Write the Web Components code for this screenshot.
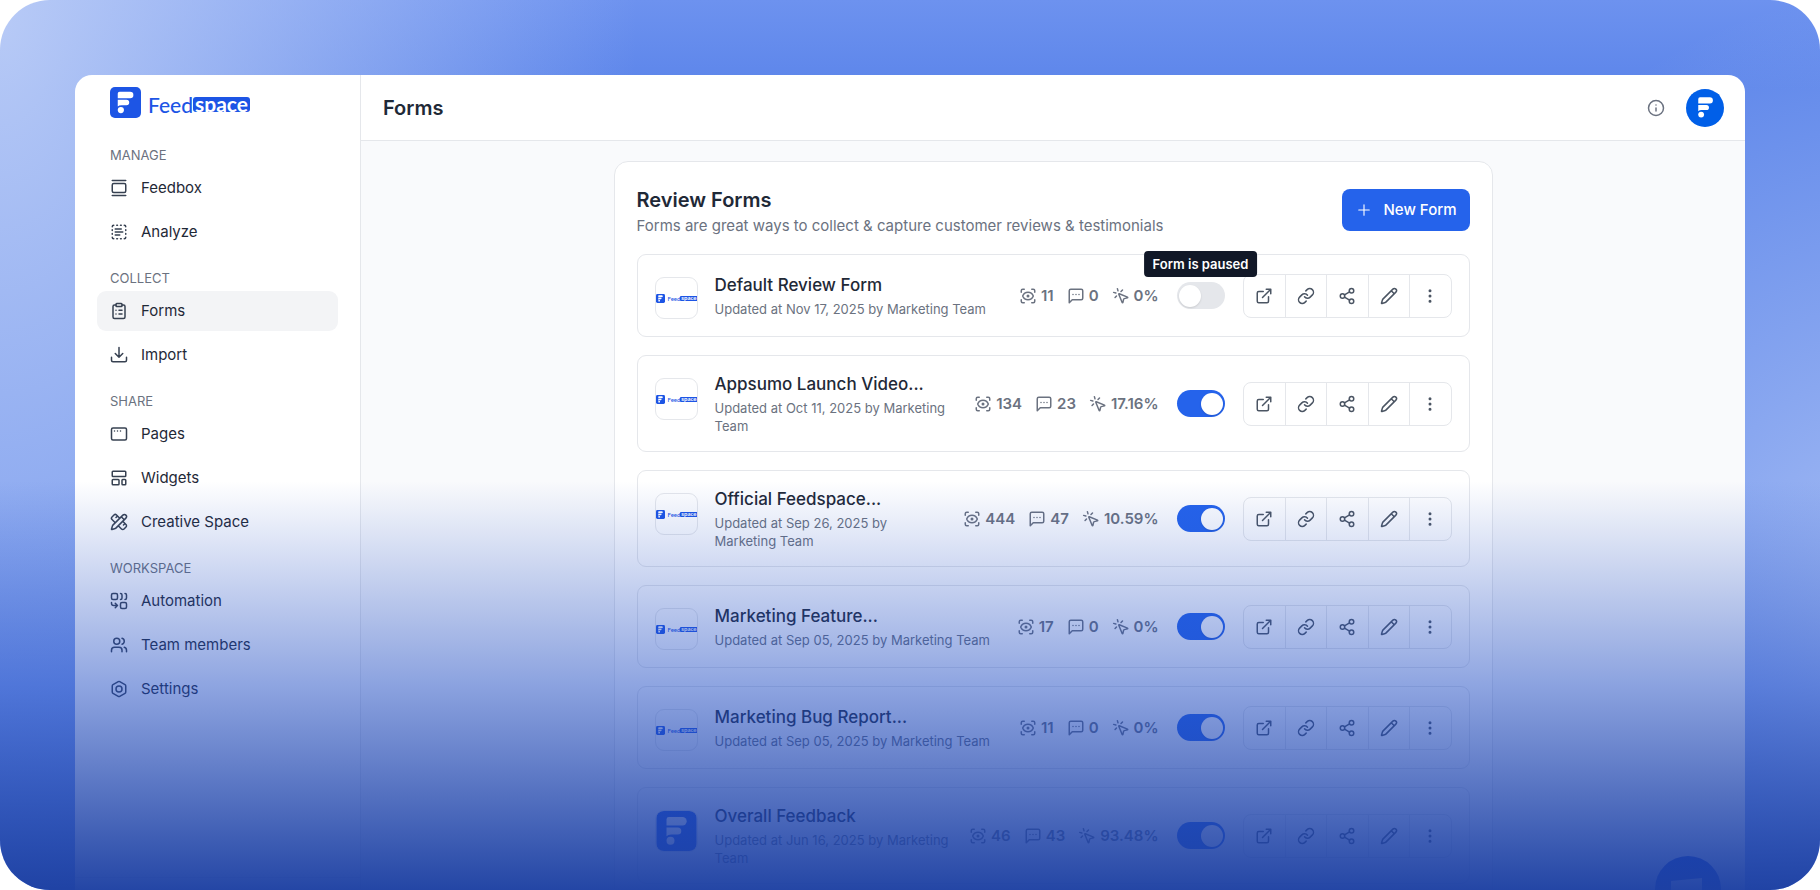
<!DOCTYPE html>
<html lang="en">
<head>
<meta charset="utf-8">
<title>Forms - Feedspace</title>
<meta name="viewport" content="width=device-width, initial-scale=1">
<style>
  body { margin: 0; background: #fff; font-family: Inter, "Liberation Sans", sans-serif; font-size: 15px; color: #1f2937; }
</style>
</head>
<body>
<app-stage>
  <app-shell>
    <side-bar slot="side">
      <nav-section label="Manage">
        <nav-item icon="gallery">Feedbox</nav-item>
        <nav-item icon="analyze">Analyze</nav-item>
      </nav-section>
      <nav-section label="Collect">
        <nav-item icon="clipboard" current>Forms</nav-item>
        <nav-item icon="download">Import</nav-item>
      </nav-section>
      <nav-section label="Share">
        <nav-item icon="window">Pages</nav-item>
        <nav-item icon="template">Widgets</nav-item>
        <nav-item icon="ruler">Creative Space</nav-item>
      </nav-section>
      <nav-section label="Workspace">
        <nav-item icon="combine">Automation</nav-item>
        <nav-item icon="users">Team members</nav-item>
        <nav-item icon="bolt">Settings</nav-item>
      </nav-section>
    </side-bar>
    <top-bar slot="top">Forms</top-bar>
    <form-panel>
      <span slot="title">Review Forms</span>
      <span slot="text">Forms are great ways to collect &amp; capture customer reviews &amp; testimonials</span>
      <form-row views="11" replies="0" rate="0%" tip="Form is paused">Default Review Form<span slot="meta">Updated at Nov 17, 2025 by Marketing Team</span></form-row>
      <form-row views="134" replies="23" rate="17.16%" active>Appsumo Launch Video...<span slot="meta">Updated at Oct 11, 2025 by Marketing Team</span></form-row>
      <form-row views="444" replies="47" rate="10.59%" active>Official Feedspace...<span slot="meta">Updated at Sep 26, 2025 by Marketing Team</span></form-row>
      <form-row views="17" replies="0" rate="0%" active>Marketing Feature...<span slot="meta">Updated at Sep 05, 2025 by Marketing Team</span></form-row>
      <form-row views="11" replies="0" rate="0%" active>Marketing Bug Report...<span slot="meta">Updated at Sep 05, 2025 by Marketing Team</span></form-row>
      <form-row views="46" replies="43" rate="93.48%" active mark>Overall Feedback<span slot="meta">Updated at Jun 16, 2025 by Marketing Team</span></form-row>
    </form-panel>
  </app-shell>
</app-stage>

<script>
const ICONS = {
  gallery: '<path d="M3 2h18M3 22h18"/><rect x="3" y="6" width="18" height="12" rx="2"/>',
  analyze: '<path d="M14 21h1M14 3h1M19 3a2 2 0 0 1 2 2M21 14v1M21 19a2 2 0 0 1-2 2M21 9v1M3 14v1M3 9v1M5 21a2 2 0 0 1-2-2M5 3a2 2 0 0 0-2 2M7 12h10M7 16h6M7 8h8M9 21h1M9 3h1"/>',
  clipboard: '<rect x="8" y="2" width="8" height="4" rx="1"/><path d="M16 4h2a2 2 0 0 1 2 2v14a2 2 0 0 1-2 2H6a2 2 0 0 1-2-2V6a2 2 0 0 1 2-2h2M12 11h4M12 16h4M8 11h.01M8 16h.01"/>',
  download: '<path d="M22 15v4a2 2 0 0 1-2 2H4a2 2 0 0 1-2-2v-4M7 10l5 5 5-5M12 15V2"/>',
  window: '<rect x="2" y="4" width="20" height="16" rx="2"/><path d="M6 8h.01M10 8h.01M14 8h.01"/>',
  template: '<rect x="3" y="3" width="18" height="7" rx="1"/><rect x="3" y="14" width="9" height="7" rx="1"/><rect x="16" y="14" width="5" height="7" rx="1"/>',
  ruler: '<path d="M13 7 8.7 2.7a2.41 2.41 0 0 0-3.4 0L2.7 5.3a2.41 2.41 0 0 0 0 3.4L7 13M8 6l2-2M18 16l2-2M17 11l4.3 4.3c.94.94.94 2.46 0 3.4l-2.6 2.6c-.94.94-2.46.94-3.4 0L11 17M21.174 6.812a1 1 0 0 0-3.986-3.987L3.842 16.174a2 2 0 0 0-.5.83l-1.321 4.352a.5.5 0 0 0 .623.622l4.353-1.32a2 2 0 0 0 .83-.497zM15 5l4 4"/>',
  combine: '<path d="M10 18H5a3 3 0 0 1-3-3v-1M14 2a2 2 0 0 1 2 2v4a2 2 0 0 1-2 2M20 2a2 2 0 0 1 2 2v4a2 2 0 0 1-2 2M7 21l3-3-3-3"/><rect x="14" y="14" width="8" height="8" rx="2"/><rect x="2" y="2" width="8" height="8" rx="2"/>',
  users: '<path d="M16 21v-2a4 4 0 0 0-4-4H6a4 4 0 0 0-4 4v2M22 21v-2a4 4 0 0 0-3-3.87M16 3.13a4 4 0 0 1 0 7.75"/><circle cx="9" cy="7" r="4"/>',
  bolt: '<path d="M21 16V8a2 2 0 0 0-1-1.73l-7-4a2 2 0 0 0-2 0l-7 4A2 2 0 0 0 3 8v8a2 2 0 0 0 1 1.73l7 4a2 2 0 0 0 2 0l7-4A2 2 0 0 0 21 16z"/><circle cx="12" cy="12" r="4"/>',
  info: '<circle cx="12" cy="12" r="10"/><path d="M12 16v-4M12 8h.01"/>',
  plus: '<path d="M5 12h14M12 5v14"/>',
  eye: '<path d="M3 7V5a2 2 0 0 1 2-2h2M17 3h2a2 2 0 0 1 2 2v2M21 17v2a2 2 0 0 1-2 2h-2M7 21H5a2 2 0 0 1-2-2v-2M18.944 12.33a1 1 0 0 0 0-.66 7.5 7.5 0 0 0-13.888 0 1 1 0 0 0 0 .66 7.5 7.5 0 0 0 13.888 0"/><circle cx="12" cy="12" r="1"/>',
  message: '<path d="M21 15a2 2 0 0 1-2 2H7l-4 4V5a2 2 0 0 1 2-2h14a2 2 0 0 1 2 2zM8 10h.01M12 10h.01M16 10h.01"/>',
  click: '<path d="M14 4.1 12 6M5.1 8l-2.9-.8M6 12l-1.9 2M7.2 2.2 8 5.1M9.037 9.69a.498.498 0 0 1 .653-.653l11 4.5a.5.5 0 0 1-.074.949l-4.349 1.041a1 1 0 0 0-.74.739l-1.04 4.35a.5.5 0 0 1-.95.074z"/>',
  open: '<path d="M15 3h6v6M10 14 21 3M18 13v6a2 2 0 0 1-2 2H5a2 2 0 0 1-2-2V8a2 2 0 0 1 2-2h6"/>',
  link: '<path d="M10 13a5 5 0 0 0 7.54.54l3-3a5 5 0 0 0-7.07-7.07l-1.72 1.71M14 11a5 5 0 0 0-7.54-.54l-3 3a5 5 0 0 0 7.07 7.07l1.71-1.71"/>',
  share: '<circle cx="18" cy="5" r="3"/><circle cx="6" cy="12" r="3"/><circle cx="18" cy="19" r="3"/><path d="M8.59 13.51l6.83 3.98M15.41 6.51l-6.82 3.98"/>',
  pencil: '<path d="M21.174 6.812a1 1 0 0 0-3.986-3.987L3.842 16.174a2 2 0 0 0-.5.83l-1.321 4.352a.5.5 0 0 0 .623.622l4.353-1.32a2 2 0 0 0 .83-.497zM15 5l4 4"/>',
  more: '<circle cx="12" cy="5" r="1"/><circle cx="12" cy="12" r="1"/><circle cx="12" cy="19" r="1"/>'
};

/* Registers an element whose shadow root is filled by render(host). */
function element(name, render) {
  customElements.define(name, class extends HTMLElement {
    constructor() { super(); this.attachShadow({ mode: 'open' }); }
    connectedCallback() {
      const template = document.createElement('template');
      template.innerHTML = render(this);
      this.shadowRoot.replaceChildren(template.content.cloneNode(true));
    }
  });
}
const attr = (host, name) => host.getAttribute(name) || '';

element('app-icon', host => `
  <style>
    :host { display: block; flex: none; width: 18px; height: 18px; }
    svg { display: block; width: 100%; height: 100%; fill: none; stroke: currentColor; stroke-width: var(--stroke, 2); stroke-linecap: round; stroke-linejoin: round; }
  </style>
  <svg viewBox="0 0 24 24" aria-hidden="true">${ICONS[attr(host, 'name')]}</svg>`);

element('brand-mark', () => `
  <style>
    :host { display: block; flex: none; width: 31px; height: 31px; }
    svg { display: block; width: 100%; height: 100%; }
    rect { fill: var(--mark, #1d55e5); }
  </style>
  <svg viewBox="0 0 100 100" aria-hidden="true">
    <rect width="100" height="100" rx="16"/>
    <g fill="#fff">
      <path d="M31 15H65a10.500 10.500 0 0 1 0 21H25V21a6 6 0 0 1 6-6z"/>
      <path d="M25 41H53a9 9 0 0 1 0 18H37q-8 0-12 4z"/>
      <circle cx="35" cy="74.500" r="10"/>
    </g>
  </svg>`);

element('brand-logo', () => `
  <style>
    :host { display: flex; align-items: center; gap: 7px; color: #1d55e5; font: 500 21px/21px Lato, sans-serif; }
    .word { display: flex; align-items: center; padding-top: 4px; }
    .tag { display: flex; align-items: center; height: 15px; padding: 0 2px; border-radius: 3px; background: #1d55e5; color: #fff; font-weight: 700; }
    .tag span { padding-bottom: 3px; }
    :host([mini]) { gap: 3px; font-size: 6px; line-height: 6px; }
    :host([mini]) brand-mark { width: 9px; height: 9px; }
    :host([mini]) .word { padding-top: 1px; }
    :host([mini]) .tag { height: 5px; padding: 0 1px; border-radius: 1px; }
    :host([mini]) .tag span { padding-bottom: 1px; }
  </style>
  <brand-mark></brand-mark>
  <div class="word"><span>Feed</span><div class="tag"><span>space</span></div></div>`);

element('app-stage', () => `
  <style>
    :host {
      display: flex; flex-direction: column; position: relative; box-sizing: border-box; height: 100vh; padding: 75px 75px 0; overflow: hidden; border-radius: 50px;
      background:
        radial-gradient(ellipse 35% 130% at 0 2%, rgba(190,207,247,.92), rgba(190,207,247,0)),
        radial-gradient(ellipse 29% 74% at 104% 73%, rgba(190,207,247,.8), rgba(190,207,247,0)),
        linear-gradient(#6d92ef, #5c85ea 10%, #5c85ea);
    }
    .shade { position: absolute; inset: 54% 0 0; pointer-events: none; background: linear-gradient(rgba(37,85,215,0), rgba(30,75,195,.5) 50%, rgba(29,64,162,.97)); }
  </style>
  <slot></slot>
  <div class="shade"></div>`);

element('app-shell', () => `
  <style>
    :host { display: grid; grid-template-columns: 286px 1fr; flex: 1; min-height: 0; position: relative; overflow: hidden; border-radius: 17px 17px 0 0; background: #fff; }
    .main { display: flex; flex-direction: column; min-width: 0; min-height: 0; }
    main { flex: 1; min-height: 0; overflow: hidden; padding: 20px 20px 0; background: #f9fafc; }
    .chat { position: absolute; right: 24px; bottom: -32px; width: 66px; height: 66px; padding: 0; border: 0; border-radius: 50%; background: #0b3fd0; }
    .chat svg { display: block; width: 100%; height: 100%; }
  </style>
  <slot name="side"></slot>
  <div class="main">
    <slot name="top"></slot>
    <main><slot></slot></main>
  </div>
  <button class="chat" aria-label="Open chat"><svg viewBox="0 0 66 66"><path d="M16 25l31-3v24l-31 3z" fill="#fff"/></svg></button>`);

element('side-bar', () => `
  <style>
    :host { display: flex; flex-direction: column; box-sizing: border-box; min-height: 0; padding-top: 12px; border-right: 1px solid #e5e7eb; }
    a { display: block; padding: 0 35px; margin-bottom: 27px; text-decoration: none; }
    nav { display: flex; flex-direction: column; gap: 16px; padding: 0 22px; }
    footer { margin-top: auto; height: 12px; border-top: 1px solid #e5e7eb; }
  </style>
  <a href="#" aria-label="Feedspace home"><brand-logo></brand-logo></a>
  <nav><slot></slot></nav>
  <footer></footer>`);

element('nav-section', host => `
  <style>
    :host { display: block; }
    h2 { margin: 0 0 3px; padding: 0 13px; font-size: 13px; line-height: 20px; font-weight: 400; text-transform: uppercase; color: #6b7280; }
    div { display: flex; flex-direction: column; gap: 4px; }
  </style>
  <h2>${attr(host, 'label')}</h2>
  <div><slot></slot></div>`);

element('nav-item', host => `
  <style>
    :host { display: block; }
    a { display: flex; align-items: center; gap: 13px; height: 40px; padding: 0 13px; border-radius: 9px; color: #1f2937; text-decoration: none; line-height: 20px; }
    a[aria-current] { background: #f3f4f6; }
    app-icon { color: #374151; }
  </style>
  <a href="#"${host.hasAttribute('current') ? ' aria-current="page"' : ''}><app-icon name="${attr(host, 'icon')}"></app-icon><span><slot></slot></span></a>`);

element('top-bar', () => `
  <style>
    :host { display: flex; align-items: center; flex: none; box-sizing: border-box; height: 66px; padding: 0 21px 0 22px; border-bottom: 1px solid #e5e7eb; }
    h1 { margin: 0 auto 0 0; font-size: 20px; line-height: 26px; font-weight: 600; }
    button { padding: 0; border: 0; background: none; color: #6b7280; }
    .user { display: grid; place-items: center; width: 38px; height: 38px; margin-left: 21px; border-radius: 50%; background: #005fe8; --mark: #005fe8; }
    brand-mark { width: 29px; height: 29px; }
  </style>
  <h1><slot></slot></h1>
  <button aria-label="Help"><app-icon name="info"></app-icon></button>
  <button class="user" aria-label="Account"><brand-mark></brand-mark></button>`);

element('form-panel', () => `
  <style>
    :host { display: block; box-sizing: border-box; max-width: 879px; margin: 0 auto; padding: 25px 22px; border: 1px solid #e5e7eb; border-radius: 14px; background: #fff; }
    header { display: flex; align-items: flex-start; justify-content: space-between; margin-bottom: 17px; }
    h2 { margin: 0 0 2px; font-size: 20px; line-height: 26px; font-weight: 600; }
    p { margin: 0; line-height: 22px; color: #6b7280; }
    button { display: flex; align-items: center; gap: 10px; height: 42px; margin-top: 2px; padding: 0 13px; border: 0; border-radius: 8px; background: #2563eb; color: #fff; font: 500 15px/20px Inter, sans-serif; --stroke: 1.5; }
    .rows { display: flex; flex-direction: column; gap: 18px; }
  </style>
  <header>
    <div><h2><slot name="title"></slot></h2><p><slot name="text"></slot></p></div>
    <button><app-icon name="plus"></app-icon>New Form</button>
  </header>
  <div class="rows"><slot></slot></div>`);

element('stat-item', host => `
  <style>
    :host { display: flex; align-items: center; gap: 4px; font-weight: 600; line-height: 20px; color: #6b7280; }
  </style>
  <app-icon name="${attr(host, 'icon')}"></app-icon><span><slot></slot></span>`);

element('toggle-switch', host => `
  <style>
    :host { display: block; flex: none; position: relative; }
    input { appearance: none; display: flex; align-items: center; box-sizing: border-box; width: 48px; height: 27px; margin: 0; padding: 0 2px; border-radius: 14px; background: #e5e7eb; }
    input::before { content: ""; width: 22px; height: 22px; border-radius: 50%; background: #fff; box-shadow: 0 1px 2px rgba(0,0,0,.12); }
    input:checked { justify-content: flex-end; background: #2563eb; }
    .tip { position: absolute; left: 50%; bottom: 32px; padding: 3px 9px; transform: translateX(-50%); border-radius: 4px; background: #111827; color: #fff; font-size: 13px; line-height: 20px; font-weight: 600; white-space: nowrap; }
  </style>
  <input type="checkbox" role="switch" aria-label="Form is active"${host.hasAttribute('on') ? ' checked' : ''}>
  ${host.hasAttribute('tip') ? `<div class="tip" role="tooltip">${attr(host, 'tip')}</div>` : ''}`);

element('action-group', () => `
  <style>
    :host { display: grid; grid-template-columns: repeat(5, 1fr); flex: none; box-sizing: border-box; width: 209px; height: 44px; overflow: hidden; border: 1px solid #e5e7eb; border-radius: 8px; background: #fff; }
    button { display: grid; place-items: center; padding: 0; border: 0; background: none; color: #4b5563; }
    button + button { border-left: 1px solid #e5e7eb; }
  </style>
  ${[['open', 'Open form'], ['link', 'Copy link'], ['share', 'Share'], ['pencil', 'Edit'], ['more', 'More actions']]
    .map(([icon, label]) => `<button aria-label="${label}"><app-icon name="${icon}"></app-icon></button>`).join('')}`);

element('form-row', host => `
  <style>
    :host { display: flex; align-items: center; box-sizing: border-box; min-height: 83px; padding: 16px 17px; border: 1px solid #e5e7eb; border-radius: 9px; }
    .thumb { display: flex; align-items: center; align-self: flex-start; flex: none; box-sizing: border-box; width: 43px; height: 42px; margin: 6px 17px 0 0; overflow: hidden; border: 1px solid #e5e7eb; border-radius: 9px; }
    .thumb brand-mark { width: 100%; height: 100%; }
    .text { flex: 1; min-width: 0; }
    h3 { margin: 0 0 2px; font-size: 17px; line-height: 25px; font-weight: 500; }
    p { margin: 0; font-size: 13px; line-height: 18px; color: #6b7280; }
    .stats { display: flex; gap: 13px; margin: 0 18px 0 12px; }
    action-group { margin-left: 18px; }
  </style>
  <div class="thumb">${host.hasAttribute('mark') ? '<brand-mark></brand-mark>' : '<brand-logo mini></brand-logo>'}</div>
  <div class="text"><h3><slot></slot></h3><p><slot name="meta"></slot></p></div>
  <div class="stats">
    <stat-item icon="eye">${attr(host, 'views')}</stat-item>
    <stat-item icon="message">${attr(host, 'replies')}</stat-item>
    <stat-item icon="click">${attr(host, 'rate')}</stat-item>
  </div>
  <toggle-switch${host.hasAttribute('active') ? ' on' : ''}${host.hasAttribute('tip') ? ` tip="${attr(host, 'tip')}"` : ''}></toggle-switch>
  <action-group></action-group>`);
</script>
</body>
</html>
